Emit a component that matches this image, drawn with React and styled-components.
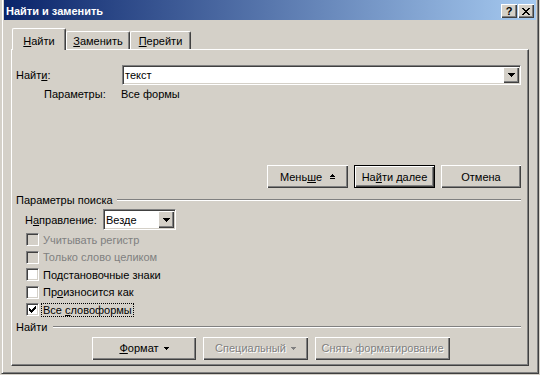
import React from "react";
import styled, { createGlobalStyle } from "styled-components";

const FACE = "#d4d0c8";
const SHADOW = "#808080";
const DARK = "#404040";

const GlobalStyle = createGlobalStyle`
  html, body {
    margin: 0;
    padding: 0;
    background: ${FACE};
    overflow: hidden;
  }
  body {
    font-family: "Liberation Sans", Arial, sans-serif;
    font-size: 11px;
    color: #000;
  }
  u {
    text-underline-offset: 1px;
  }
`;

const Window = styled.div`
  box-sizing: border-box;
  width: 538px;
  height: 377px;
  margin: -3px 0 0 1px;
  display: flex;
  flex-direction: column;
  background: ${FACE};
  border: 1px solid;
  border-color: ${FACE} ${DARK} ${DARK} ${FACE};
  box-shadow: inset 1px 1px #fff, inset -1px -1px ${SHADOW};
  padding: 2px;
`;

const TitleBar = styled.div`
  flex: none;
  height: 20px;
  display: flex;
  align-items: flex-start;
  padding: 0 2px;
  background: linear-gradient(to right, #0a246a, #a6caf0);
`;

const Title = styled.span`
  flex: 1;
  color: #fff;
  font-weight: bold;
  line-height: 18px;
  padding-top: 2px;
`;

const CaptionButtons = styled.div`
  display: flex;
  gap: 1px;
  margin-top: 4px;
`;

const CaptionButton = styled.span`
  box-sizing: border-box;
  width: 16px;
  height: 14px;
  display: flex;
  align-items: center;
  justify-content: center;
  background: ${FACE};
  box-shadow: inset 1px 1px #fff, inset -1px -1px ${DARK}, inset -2px -2px ${SHADOW};
  font-weight: bold;
  font-size: 11px;
  line-height: 14px;
`;

const Body = styled.div`
  flex: 1;
  display: flex;
  flex-direction: column;
  padding: 8px 7px 6px 7px;
`;

const TabStrip = styled.div`
  flex: none;
  height: 21px;
  display: flex;
  align-items: flex-end;
  padding-left: 1px;
`;

const Tab = styled.div`
  position: relative;
  z-index: ${(p) => (p.$active ? 1 : 0)};
  box-sizing: border-box;
  width: ${(p) => p.$w}px;
  height: ${(p) => (p.$active ? 22 : 18)}px;
  margin-bottom: ${(p) => (p.$active ? -1 : 0)}px;
  padding-top: ${(p) => (p.$active ? 3 : 1)}px;
  display: flex;
  align-items: center;
  justify-content: center;
  background: ${FACE};
  border-top: 1px solid #fff;
  border-left: 1px solid #fff;
  border-right: 1px solid ${DARK};
  border-radius: 2px 2px 0 0;
  box-shadow: inset -1px 0 ${SHADOW};
`;

const Panel = styled.div`
  flex: 1;
  display: flex;
  flex-direction: column;
  border: 1px solid;
  border-color: #fff ${DARK} ${DARK} #fff;
  box-shadow: inset -1px -1px ${SHADOW};
  padding: 15px 7px 5px 4px;
`;

const FieldRow = styled.div`
  display: flex;
  align-items: center;
  height: ${(p) => p.$h}px;
  margin-top: ${(p) => p.$mt || 0}px;
  padding-left: ${(p) => p.$pl || 0}px;
`;

const FieldLabel = styled.span`
  flex: none;
  width: ${(p) => p.$w}px;
`;

const Combo = styled.div`
  box-sizing: border-box;
  flex: ${(p) => (p.$w ? "none" : 1)};
  width: ${(p) => (p.$w ? `${p.$w}px` : "auto")};
  height: ${(p) => p.$h}px;
  display: flex;
  background: #fff;
  border: 1px solid;
  border-color: ${SHADOW} #fff #fff ${SHADOW};
  box-shadow: inset 1px 1px ${DARK}, inset -1px -1px ${FACE};
  padding: 1px;
`;

const ComboText = styled.span`
  flex: 1;
  padding-left: 1px;
  display: flex;
  align-items: center;
`;

const DropButton = styled.span`
  flex: none;
  width: 16px;
  display: flex;
  align-items: center;
  justify-content: center;
  background: ${FACE};
  box-shadow: inset 1px 1px #fff, inset -1px -1px ${DARK}, inset -2px -2px ${SHADOW};
`;

const ButtonRow = styled.div`
  display: flex;
  justify-content: ${(p) => (p.$end ? "flex-end" : "flex-start")};
  gap: ${(p) => p.$gap}px;
  margin-top: ${(p) => p.$mt}px;
  padding-left: ${(p) => p.$pl || 0}px;
`;

const Button = styled.button`
  box-sizing: border-box;
  width: ${(p) => p.$w}px;
  height: 23px;
  padding: 0;
  display: inline-flex;
  align-items: center;
  justify-content: center;
  gap: ${(p) => p.$gap || 0}px;
  font: inherit;
  color: ${(p) => (p.$disabled ? SHADOW : "#000")};
  text-shadow: ${(p) => (p.$disabled ? "1px 1px 0 #fff" : "none")};
  background: ${FACE};
  border: ${(p) => (p.$default ? "1px solid #000" : "none")};
  box-shadow: inset 1px 1px #fff, inset -1px -1px ${DARK}, inset -2px -2px ${SHADOW};
`;

const GroupHeader = styled.div`
  display: flex;
  align-items: center;
  gap: ${(p) => p.$gap}px;
  height: 13px;
  margin-top: ${(p) => p.$mt}px;

  &::after {
    content: "";
    flex: 1;
    border-top: 1px solid ${SHADOW};
    border-bottom: 1px solid #fff;
  }
`;

const CheckList = styled.div`
  display: flex;
  flex-direction: column;
  margin-top: 1px;
`;

const CheckRow = styled.div`
  height: 17.5px;
  display: flex;
  align-items: center;
  gap: 2px;
  padding-left: 10px;
  color: ${(p) => (p.$disabled ? SHADOW : "#000")};
`;

const Box = styled.span`
  box-sizing: border-box;
  flex: none;
  width: 13px;
  height: 13px;
  display: flex;
  align-items: center;
  justify-content: center;
  background: ${(p) => (p.$disabled ? FACE : "#fff")};
  border: 1px solid;
  border-color: ${SHADOW} #fff #fff ${SHADOW};
  box-shadow: inset 1px 1px ${DARK}, inset -1px -1px ${FACE};
`;

const CheckLabel = styled.span`
  line-height: 12px;
  padding: 0 1px;
  border: 1px dotted ${(p) => (p.$focus ? "#000" : "transparent")};
`;

const Pixels = ({ w, h, d, color }) => (
  <svg width={w} height={h} viewBox={`0 0 ${w} ${h}`} shapeRendering="crispEdges">
    <path d={d} fill={color || "currentColor"} />
  </svg>
);

const DOWN_ARROW = "M0 0h7v1h-7z M1 1h5v1h-5z M2 2h3v1h-3z M3 3h1v1h-1z";
const SMALL_DOWN = "M0 0h5v1h-5z M1 1h3v1h-3z M2 2h1v1h-1z";
const LESS_ICON = "M2 0h1v1h-1z M1 1h3v1h-3z M0 2h5v1h-5z M0 4h5v1h-5z";
const CHECK =
  "M0 2h1v3h-1z M1 3h1v3h-1z M2 4h1v3h-1z M3 3h1v3h-1z M4 2h1v3h-1z M5 1h1v3h-1z M6 0h1v3h-1z";
const CLOSE =
  "M0 0h2v1h-2z M6 0h2v1h-2z M1 1h2v1h-2z M5 1h2v1h-2z M2 2h4v1h-4z M3 3h2v1h-2z M2 4h4v1h-4z M1 5h2v1h-2z M5 5h2v1h-2z M0 6h2v1h-2z M6 6h2v1h-2z";

const Check = ({ checked, disabled, focus, children }) => (
  <CheckRow $disabled={disabled}>
    <Box $disabled={disabled}>{checked && <Pixels w={7} h={7} d={CHECK} color="#000" />}</Box>
    <CheckLabel $focus={focus}>{children}</CheckLabel>
  </CheckRow>
);

const options = [
  { label: "Учитывать регистр", disabled: true },
  { label: "Только слово целиком", disabled: true },
  { label: <>По<u>д</u>становочные знаки</> },
  { label: <>Пр<u>о</u>износится как</> },
  { label: <>Все <u>с</u>ловоформы</>, checked: true, focus: true },
];

export default function App() {
  return (
    <>
      <GlobalStyle />
      <Window>
        <TitleBar>
          <Title>Найти и заменить</Title>
          <CaptionButtons>
            <CaptionButton>?</CaptionButton>
            <CaptionButton>
              <Pixels w={8} h={7} d={CLOSE} color="#000" />
            </CaptionButton>
          </CaptionButtons>
        </TitleBar>

        <Body>
          <TabStrip>
            <Tab $active $w={54}>
              <span>
                <u>Н</u>айти
              </span>
            </Tab>
            <Tab $w={64}>
              <span>
                <u>З</u>аменить
              </span>
            </Tab>
            <Tab $w={61}>
              <span>
                <u>П</u>ерейти
              </span>
            </Tab>
          </TabStrip>

          <Panel>
            <FieldRow $h={20}>
              <FieldLabel $w={106}>
                Найт<u>и</u>:
              </FieldLabel>
              <Combo $h={20}>
                <ComboText>текст</ComboText>
                <DropButton>
                  <Pixels w={7} h={4} d={DOWN_ARROW} color="#000" />
                </DropButton>
              </Combo>
            </FieldRow>

            <FieldRow $h={13} $mt={2} $pl={28}>
              <FieldLabel $w={77}>Параметры:</FieldLabel>
              <span>Все формы</span>
            </FieldRow>

            <ButtonRow $end $gap={6} $mt={65}>
              <Button $w={81} $gap={8}>
                <span>
                  Мень<u>ш</u>е
                </span>
                <Pixels w={5} h={5} d={LESS_ICON} color="#000" />
              </Button>
              <Button $w={81} $default>
                <span>
                  На<u>й</u>ти далее
                </span>
              </Button>
              <Button $w={80}>Отмена</Button>
            </ButtonRow>

            <GroupHeader $mt={5} $gap={4}>
              Параметры поиска
            </GroupHeader>

            <FieldRow $h={21} $mt={3} $pl={9}>
              <FieldLabel $w={78}>
                Н<u>а</u>правление:
              </FieldLabel>
              <Combo $w={73} $h={21}>
                <ComboText>Везде</ComboText>
                <DropButton>
                  <Pixels w={7} h={4} d={DOWN_ARROW} color="#000" />
                </DropButton>
              </Combo>
            </FieldRow>

            <CheckList>
              {options.map((o, i) => (
                <Check key={i} checked={o.checked} disabled={o.disabled} focus={o.focus}>
                  {o.label}
                </Check>
              ))}
            </CheckList>

            <GroupHeader $mt={2} $gap={6}>
              Найти
            </GroupHeader>

            <ButtonRow $gap={7} $mt={3} $pl={76}>
              <Button $w={104} $gap={5}>
                <span>
                  <u>Ф</u>ормат
                </span>
                <Pixels w={5} h={3} d={SMALL_DOWN} color="#000" />
              </Button>
              <Button $w={105} $gap={5} $disabled>
                <span>Специальный</span>
                <Pixels w={5} h={3} d={SMALL_DOWN} color={SHADOW} />
              </Button>
              <Button $w={135} $disabled>
                Снять форматирование
              </Button>
            </ButtonRow>
          </Panel>
        </Body>
      </Window>
    </>
  );
}
